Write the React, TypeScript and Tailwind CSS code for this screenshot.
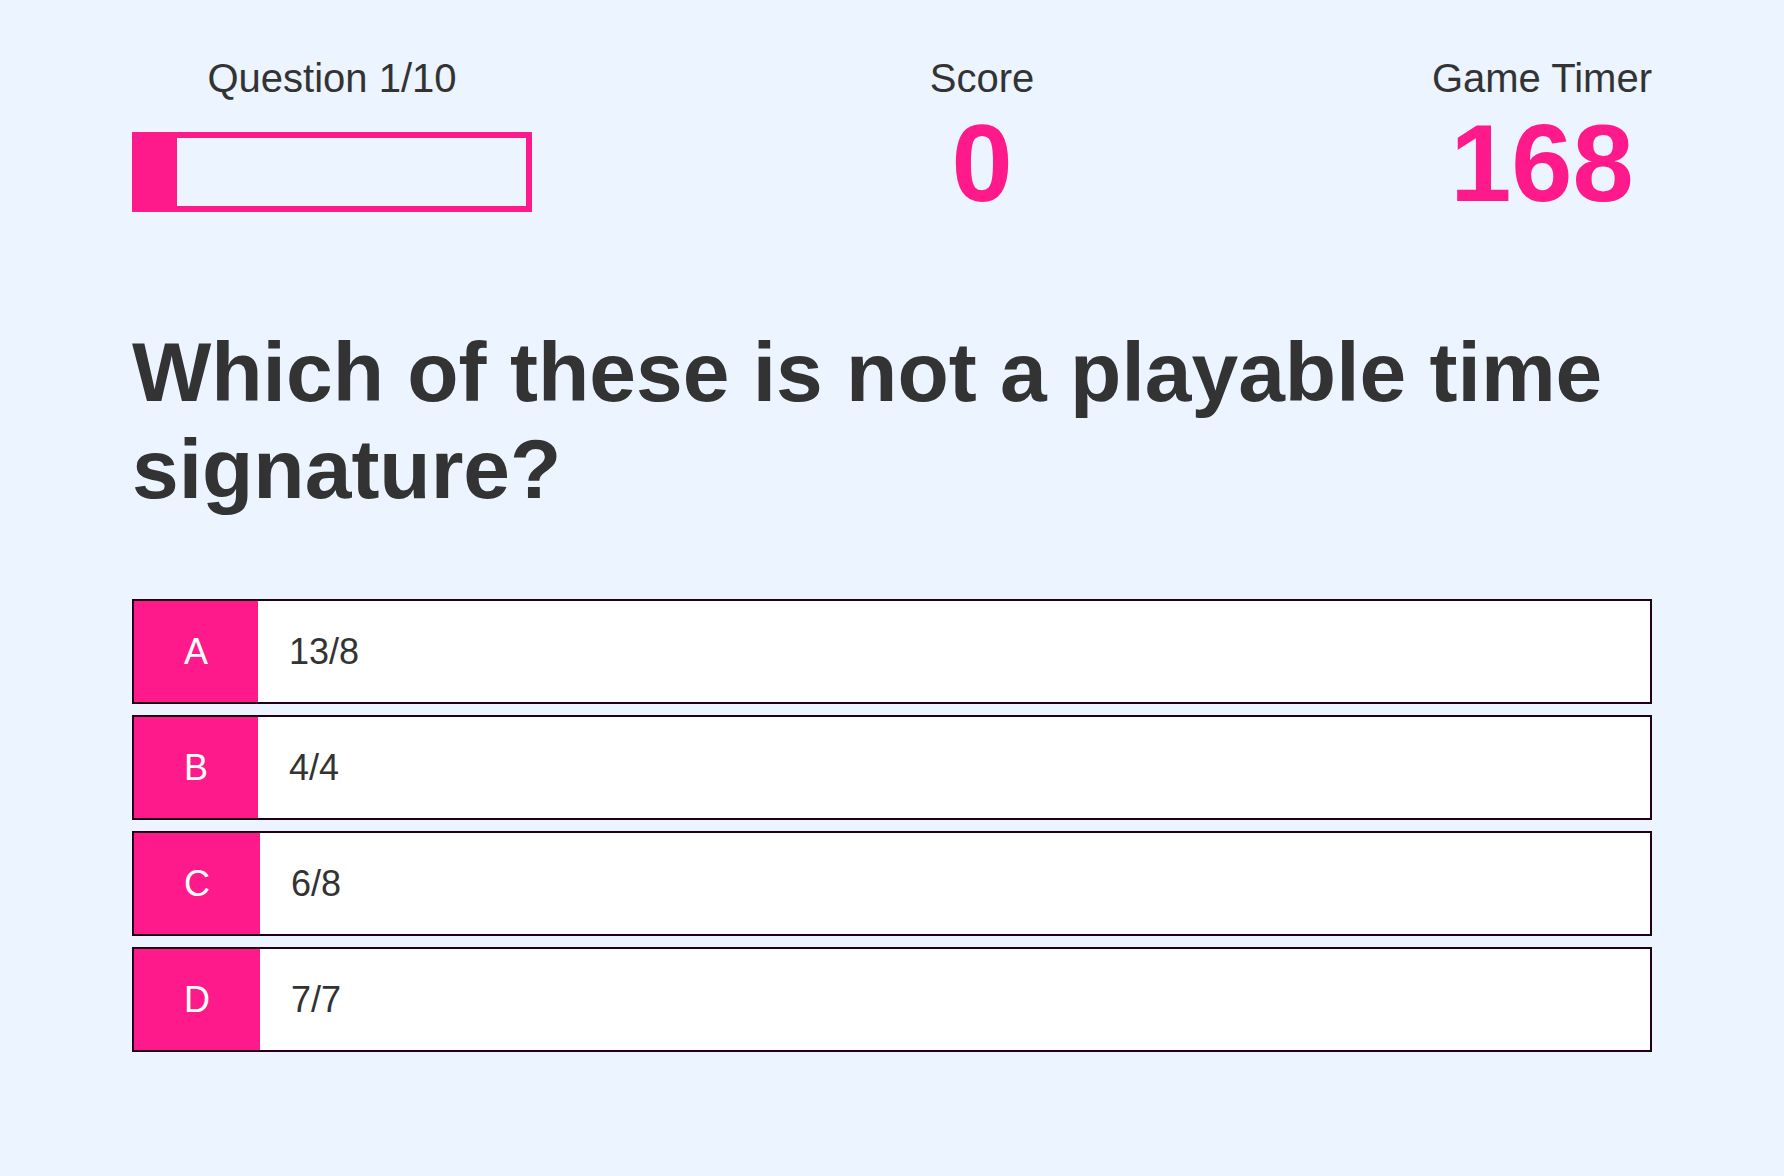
import React from "react";

const options = [
  { letter: "A", text: "13/8" },
  { letter: "B", text: "4/4" },
  { letter: "C", text: "6/8" },
  { letter: "D", text: "7/7" },
];

export default function App() {
  return (
    <div
      className="min-h-[1176px] w-full bg-[#ebf4ff] text-[#333333] px-[132px] pt-[55px]"
      style={{ fontFamily: '"Liberation Sans", Arial, Helvetica, sans-serif' }}
    >
      <div className="flex justify-between items-start">
        <div className="w-[400px] flex flex-col items-center">
          <div className="text-[40px] leading-[46px]">Question 1/10</div>
          <div className="mt-[31px] h-[80px] w-full border-[6px] border-[#ff1a8c]">
            <div className="h-full w-[10%] bg-[#ff1a8c]" />
          </div>
        </div>
        <div className="flex flex-col items-center">
          <div className="text-[40px] leading-[46px]">Score</div>
          <div className="mt-[7px] text-[110px] leading-none font-bold text-[#ff1a8c]">0</div>
        </div>
        <div className="flex flex-col items-center">
          <div className="text-[40px] leading-[46px]">Game Timer</div>
          <div className="mt-[7px] text-[110px] leading-none font-bold text-[#ff1a8c]">168</div>
        </div>
      </div>

      <h1 className="mt-[106px] text-[84px] leading-[97px] font-bold text-[#333333]">
        Which of these is not a playable time signature?
      </h1>

      <div className="mt-[81px] flex flex-col gap-[11px]">
        {options.map((o) => (
          <div key={o.letter} className="flex border-2 border-[#200016] bg-white">
            <div className="bg-[#ff1a8c] text-white px-[50px] py-[30px] text-[36px] leading-[41px]">
              {o.letter}
            </div>
            <div className="pl-[31px] py-[30px] text-[36px] leading-[41px] text-[#333333]">
              {o.text}
            </div>
          </div>
        ))}
      </div>
    </div>
  );
}
